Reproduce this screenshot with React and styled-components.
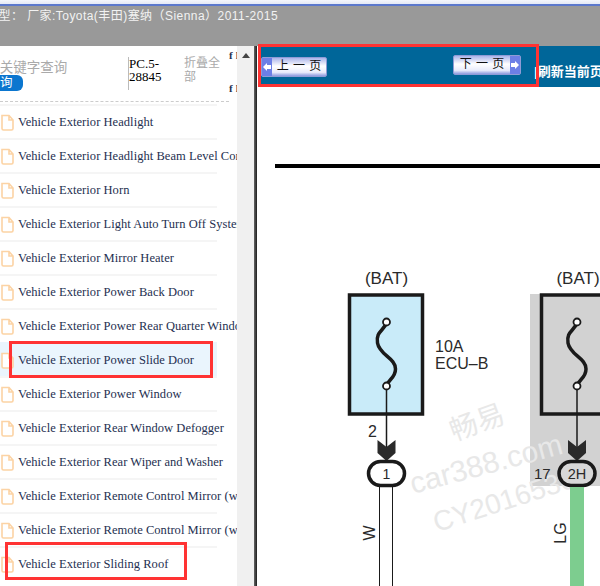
import React from 'react'
import styled, { createGlobalStyle } from 'styled-components'

const Global = createGlobalStyle`
    html, body { margin: 0; padding: 0; background: #fff; }
    * { box-sizing: border-box; }
`
const CJK = `"Liberation Sans", "Noto Sans CJK SC", sans-serif`

const Page = styled.div`
    width: 600px;
    height: 586px;
    overflow: hidden;
    position: relative;
    display: flex;
    flex-direction: column;
    font-family: ${CJK};
`
const TopStrip = styled.div`
    height: 6px;
    flex: none;
    background: linear-gradient(#f4f6fb 0, #e4e9f6 65%, #5b78cc 66%, #5b78cc 100%);
`
const TitleBar = styled.div`
    height: 40px;
    flex: none;
    background: #999;
    color: #f2f2f2;
    font-size: 12px;
    letter-spacing: .45px;
    line-height: 21px;
    white-space: nowrap;
    overflow: hidden;
    span { display: block; margin-left: -14px; }
`
const Body = styled.div`
    flex: 1;
    display: flex;
    min-height: 0;
`
const Side = styled.aside`
    width: 237px;
    flex: none;
    overflow: hidden;
    background: #fff;
`
const SearchHead = styled.div`
    height: 55px;
    display: grid;
    grid-template-columns: 128px 56px 45px 8px;
`
const SearchCol = styled.div`
    padding-top: 14px;
    overflow: hidden;
`
const Hint = styled.div`
    color: #aaa;
    font-size: 13.5px;
    line-height: 16px;
    white-space: nowrap;
    margin-left: -4px;
`
const SearchBtn = styled.div`
    width: 23px;
    height: 16px;
    background: #0b76cf;
    border-radius: 0 6px 6px 0;
    color: #fff;
    font-size: 12.5px;
    line-height: 16px;
    margin-top: -1px;
`
const Code = styled.div`
    margin-top: 11px;
    width: 50px;
    height: 33px;
    border-left: 1px solid #bbb;
    font-family: "Liberation Serif", serif;
    font-size: 13px;
    line-height: 13px;
    color: #000;
    word-break: break-word;
`
const Fold = styled.div`
    margin-top: 10px;
    color: #aaa;
    font-size: 12px;
    line-height: 14px;
    width: 38px;
`
const Cut = styled.div`
    display: flex;
    flex-direction: column;
    justify-content: space-between;
    height: 45px;
    margin-top: 3px;
    font-family: "Liberation Serif", serif;
    font-weight: bold;
    font-size: 11px;
    letter-spacing: 3px;
    color: #1e2f50;
    white-space: nowrap;
`
const Dashes = styled.div`
    width: 229px;
    border-top: 1px dashed #ccc;
`
const List = styled.ul`
    list-style: none;
    margin: 2px 0 0;
    padding: 0;
`
const Row = styled.li`
    height: 34px;
    width: 237px;
    display: flex;
    align-items: center;
    gap: 4px;
    padding: 2px 0 0 1px;
    white-space: nowrap;
    font-family: "Liberation Serif", serif;
    font-size: 12.5px;
    letter-spacing: .05px;
    color: #1e2f50;
    background: linear-gradient(${p => (p.$active ? '#eaf5fd' : '#f5f5f5')}, ${p => (p.$active ? '#eaf5fd' : '#f5f5f5')}) no-repeat 0 0 / 217px ${p => (p.$active ? '100%' : '2px')};
`
const Track = styled.div`
    width: 17px;
    flex: none;
    background: #f0f0f0;
    display: flex;
    justify-content: center;
    padding-top: 7px;
`
const UpArrow = styled.div`
    width: 0;
    height: 0;
    border-left: 4px solid transparent;
    border-right: 4px solid transparent;
    border-bottom: 5px solid #444;
`
const Split = styled.div`
    width: 4px;
    flex: none;
    background: linear-gradient(90deg, #666 0, #222 70%, #fff 70%);
`
const Main = styled.main`
    flex: 1;
    min-width: 0;
    display: flex;
    flex-direction: column;
    background: #fff;
`
const Nav = styled.nav`
    height: 41px;
    flex: none;
    background: #006699;
    display: flex;
    align-items: flex-start;
    white-space: nowrap;
    overflow: hidden;
    padding-left: 3px;
`
const PageBtn = styled.div`
    width: ${p => p.$w}px;
    height: 20px;
    margin-top: ${p => p.$top}px;
    flex: none;
    display: flex;
    flex-direction: ${p => (p.$next ? 'row-reverse' : 'row')};
    background: linear-gradient(#aab4ea, #fff 45%, #e8ebfb 80%, #8d9adf);
    border: 1px solid #8f9bd6;
    border-radius: 2px;
    color: #111;
    font-size: 12px;
    line-height: 17px;
`
const Cap = styled.div`
    width: 10px;
    flex: none;
    background: #6c7fe6;
    color: #fff;
    display: flex;
    align-items: center;
    justify-content: center;
`
const BtnLabel = styled.div`
    flex: 1;
    text-align: center;
    word-spacing: 1px;
`
const Spacer = styled.div`
    width: 126px;
    flex: none;
`
const Refresh = styled.div`
    margin: 16px 0 0 13px;
    color: #fff;
    font-size: 13px;
    font-weight: bold;
    line-height: 20px;
`
const Sheet = styled.svg`
    display: block;
    flex: 1;
    min-height: 0;
    width: 100%;
    font-family: "Liberation Sans", sans-serif;
`
const Mark = styled.div`
    position: absolute;
    left: ${p => p.$x}px;
    top: ${p => p.$y}px;
    width: ${p => p.$w}px;
    height: ${p => p.$h}px;
    border: 3px solid #ff3333;
    pointer-events: none;
`

const rows = [
    'Headlight',
    'Headlight Beam Level Control',
    'Horn',
    'Light Auto Turn Off System',
    'Mirror Heater',
    'Power Back Door',
    'Power Rear Quarter Window',
    'Power Slide Door',
    'Power Window',
    'Rear Window Defogger',
    'Rear Wiper and Washer',
    'Remote Control Mirror (with Memory)',
    'Remote Control Mirror (without Memory)',
    'Sliding Roof',
]

function FileIcon() {
    return (
        <svg width="13" height="17" viewBox="0 0 13 17" style={{ flex: 'none' }}>
            <path d="M1 1.5 H8 L12 6 V14.5 Q12 16 10.5 16 H2.5 Q1 16 1 14.5 Z M8 1.5 V6 H12" fill="#fff" stroke="#fcd3a4" strokeWidth="1.6" />
        </svg>
    )
}

function Arrow({ left }) {
    return (
        <svg width="8" height="8" viewBox="0 0 8 8">
            <path d={left ? 'M0 4 L4 0 V2 H8 V6 H4 V8 Z' : 'M8 4 L4 0 V2 H0 V6 H4 V8 Z'} fill="#fff" />
        </svg>
    )
}

function Fuse({ x }) {
    return (
        <>
            <path d={`M${x} 322 C${x - 2} 331 ${x - 11} 331 ${x - 9} 343 C${x - 7} 355 ${x + 9} 358 ${x + 9} 369 C${x + 9} 378 ${x + 2} 379 ${x} 386`} fill="none" stroke="#1a1a1a" strokeWidth="3.5" />
            <circle cx={x} cy="322" r="3.5" fill="#fff" stroke="#1a1a1a" strokeWidth="1.8" />
            <circle cx={x} cy="386" r="3.5" fill="#fff" stroke="#1a1a1a" strokeWidth="1.8" />
            <line x1={x} y1="390" x2={x} y2="450" stroke="#1a1a1a" strokeWidth="1.5" />
            <polygon points={`${x - 9},440 ${x},447 ${x + 9},440 ${x + 9},453 ${x},461 ${x - 9},453`} fill="#2a2a2a" />
        </>
    )
}

function Diagram() {
    return (
        <Sheet viewBox="258 87 342 499" preserveAspectRatio="xMinYMin slice">
            <rect x="275" y="164" width="325" height="4" fill="#000" />

            <rect x="530" y="294" width="70" height="192" fill="#d2d2d2" />

            <g fill="#e8e8e8" textAnchor="middle">
                <text x="477" y="432" fontSize="28" transform="rotate(-20 477 422)" fontFamily={CJK}>畅易</text>
                <text x="486" y="474" fontSize="30" transform="rotate(-15 486 464)">car388.com</text>
                <text x="504" y="510" fontSize="28" transform="rotate(-18 504 500)">CY2016530</text>
            </g>

            <text x="386.5" y="284" fontSize="17" textAnchor="middle" fill="#2a2a2a">(BAT)</text>
            <rect x="349.5" y="295" width="73" height="119" fill="#c9ebf9" stroke="#1a1a1a" strokeWidth="3.5" />
            <Fuse x={386.5} />
            <text x="435" y="352" fontSize="16" fill="#2a2a2a">10A</text>
            <text x="435" y="369" fontSize="16" fill="#2a2a2a">ECU–B</text>
            <text x="368" y="437" fontSize="16" fill="#2a2a2a">2</text>
            <rect x="368.5" y="461.5" width="36" height="24" rx="12" fill="#fff" stroke="#1a1a1a" strokeWidth="3.5" />
            <text x="386.5" y="479" fontSize="14" textAnchor="middle" fill="#2a2a2a">1</text>
            <line x1="379.5" y1="487" x2="379.5" y2="586" stroke="#1a1a1a" strokeWidth="1" />
            <line x1="392.5" y1="487" x2="392.5" y2="586" stroke="#1a1a1a" strokeWidth="1" />
            <text x="375" y="533" fontSize="16" textAnchor="middle" fill="#2a2a2a" transform="rotate(-90 375 533)">W</text>

            <text x="578" y="284" fontSize="17" textAnchor="middle" fill="#2a2a2a">(BAT)</text>
            <rect x="541.5" y="295" width="80" height="119" fill="#d2d2d2" stroke="#1a1a1a" strokeWidth="3.5" />
            <Fuse x={577} />
            <rect x="559" y="461.5" width="36" height="24" rx="12" fill="#d8d8d8" stroke="#1a1a1a" strokeWidth="3.5" />
            <text x="577" y="479" fontSize="14.5" textAnchor="middle" fill="#2a2a2a">2H</text>
            <text x="534" y="479" fontSize="15" fill="#2a2a2a">17</text>
            <rect x="570" y="487" width="14" height="99" fill="#7dcd8f" />
            <text x="566" y="533" fontSize="16" textAnchor="middle" fill="#2a2a2a" transform="rotate(-90 566 533)">LG</text>
        </Sheet>
    )
}

function App() {
    return (
        <Page>
            <Global />
            <TopStrip />
            <TitleBar><span>车型： 厂家:Toyota(丰田)塞纳（Sienna）2011-2015</span></TitleBar>
            <Body>
                <Side>
                    <SearchHead>
                        <SearchCol>
                            <Hint>.关键字查询</Hint>
                            <SearchBtn>询</SearchBtn>
                        </SearchCol>
                        <Code>PC.5-28845</Code>
                        <Fold>折叠全部</Fold>
                        <Cut><span>fl</span><span>fl</span></Cut>
                    </SearchHead>
                    <Dashes />
                    <List>
                        {rows.map(r => (
                            <Row key={r} $active={r === 'Power Slide Door'}>
                                <FileIcon />
                                Vehicle Exterior {r}
                            </Row>
                        ))}
                    </List>
                </Side>
                <Track><UpArrow /></Track>
                <Split />
                <Main>
                    <Nav>
                        <PageBtn $w={66} $top={11}>
                            <Cap><Arrow left /></Cap>
                            <BtnLabel>上 一 页</BtnLabel>
                        </PageBtn>
                        <Spacer />
                        <PageBtn $w={68} $top={9} $next>
                            <Cap><Arrow /></Cap>
                            <BtnLabel>下 一 页</BtnLabel>
                        </PageBtn>
                        <Refresh>|刷新当前页</Refresh>
                    </Nav>
                    <Diagram />
                </Main>
            </Body>
            <Mark $x={258} $y={44} $w={281} $h={43} />
            <Mark $x={9} $y={341} $w={204} $h={37} />
            <Mark $x={5} $y={542} $w={182} $h={38} />
        </Page>
    )
}

export default App
